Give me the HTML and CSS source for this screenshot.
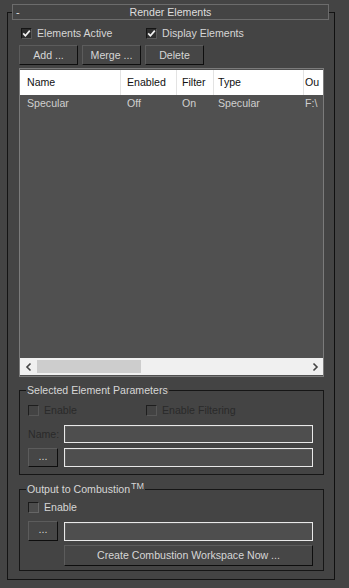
FILE: index.html
```html
<!DOCTYPE html>
<html>
<head>
<meta charset="utf-8">
<link rel="stylesheet" href="styles.css">
</head>
<body>
<div class="frame">
  <div class="rollout-head">
    <span class="minus">-</span>
    <span class="title">Render Elements</span>
    <span class="minus"></span>
  </div>
  <div class="content">
    <div class="check-row top-checks">
      <label class="check wide"><span class="box"><svg viewBox="0 0 11 11" width="11" height="11"><path d="M2.2 5.4 L4.4 7.8 L8.8 2.6" fill="none" stroke="#f2f2f2" stroke-width="1.7"/></svg></span>Elements Active</label>
      <label class="check"><span class="box"><svg viewBox="0 0 11 11" width="11" height="11"><path d="M2.2 5.4 L4.4 7.8 L8.8 2.6" fill="none" stroke="#f2f2f2" stroke-width="1.7"/></svg></span>Display Elements</label>
    </div>
    <div class="btn-row">
      <button class="btn btn-small">Add ...</button>
      <button class="btn btn-small">Merge ...</button>
      <button class="btn btn-small">Delete</button>
    </div>
    <div class="list">
      <div class="cols list-head">
        <div class="cell c-name">Name</div>
        <div class="cell c-enabled">Enabled</div>
        <div class="cell c-filter">Filter</div>
        <div class="cell c-type">Type</div>
        <div class="cell c-out">Ou</div>
      </div>
      <div class="list-body">
        <div class="cols list-row">
          <div class="cell c-name">Specular</div>
          <div class="cell c-enabled">Off</div>
          <div class="cell c-filter">On</div>
          <div class="cell c-type">Specular</div>
          <div class="cell c-out">F:\</div>
        </div>
      </div>
      <div class="hscroll">
        <span class="arrow"><svg viewBox="0 0 8 10" width="8" height="10"><path d="M5.5 1.5 L2 5 L5.5 8.5" fill="none" stroke="#444" stroke-width="1.6"/></svg></span>
        <div class="track"><div class="thumb"></div></div>
        <span class="arrow"><svg viewBox="0 0 8 10" width="8" height="10"><path d="M2.5 1.5 L6 5 L2.5 8.5" fill="none" stroke="#444" stroke-width="1.6"/></svg></span>
      </div>
    </div>

    <fieldset class="group group-params">
      <legend>Selected Element Parameters</legend>
      <div class="check-row params-checks">
        <label class="check disabled wide2"><span class="box off"></span>Enable</label>
        <label class="check disabled"><span class="box off"></span>Enable Filtering</label>
      </div>
      <div class="field-row name-row">
        <span class="field-label disabled">Name:</span>
        <span class="textbox"></span>
      </div>
      <div class="field-row path-row">
        <button class="btn btn-dots">...</button>
        <span class="textbox"></span>
      </div>
    </fieldset>

    <fieldset class="group group-comb">
      <legend>Output to Combustion<sup>TM</sup></legend>
      <div class="check-row comb-checks">
        <label class="check"><span class="box off"></span>Enable</label>
      </div>
      <div class="field-row path-row2">
        <button class="btn btn-dots">...</button>
        <span class="textbox"></span>
      </div>
      <div class="field-row create-row">
        <button class="btn btn-create">Create Combustion Workspace Now ...</button>
      </div>
    </fieldset>
  </div>
</div>
</body>
</html>
```

FILE: styles.css
```css
* { box-sizing: border-box; }

html, body {
  margin: 0;
  padding: 0;
}

body {
  width: 349px;
  height: 588px;
  overflow: hidden;
  background: #444444;
  color: #d6d6d6;
  font-family: "Liberation Sans", Arial, sans-serif;
  font-size: 10.6px;
  line-height: 13px;
}

.frame {
  margin: 12px 14px 0 7px;
  height: 568px;
  border: 1px solid #141414;
  border-right-color: #101010;
}

.rollout-head {
  margin: -9px 5px 0 4px;
  height: 16px;
  border: 1px solid #6c6c6c;
  background: #444444;
  display: flex;
  align-items: center;
  color: #dedede;
}

.minus {
  width: 14px;
  padding-left: 3px;
  font-size: 11px;
}

.title {
  flex: 1;
  text-align: center;
}

.content {
  padding: 0 10px 0 11px;
  display: flex;
  flex-direction: column;
}

.check-row {
  display: flex;
  align-items: center;
  height: 11px;
}

.top-checks {
  margin-top: 8px;
  padding-left: 2px;
}

.check {
  display: flex;
  align-items: center;
  gap: 5px;
  white-space: nowrap;
}

.check.wide { width: 125px; }
.check.wide2 { width: 118px; }

.box {
  width: 11px;
  height: 11px;
  flex: none;
  background: #2e2e2e;
  border: 1px solid #151515;
  border-right-color: #5a5a5a;
  border-bottom-color: #5a5a5a;
  display: flex;
  align-items: center;
  justify-content: center;
}

.box svg { display: block; margin: -1px; }

.box.off {
  background: #4c4c4c;
  border-color: #1a1a1a #666 #666 #1a1a1a;
}

.disabled { color: #2a2a2a; }
.check.disabled .box.off {
  background: #434343;
  border-color: #1e1e1e #575757 #575757 #1e1e1e;
}

.btn-row {
  display: flex;
  gap: 4px;
  margin-top: 6px;
}

.btn {
  font: inherit;
  color: #d6d6d6;
  background: #464646;
  border: 1px solid #0e0e0e;
  border-top-color: #5c5c5c;
  border-left-color: #5c5c5c;
  padding: 0;
  margin: 0;
  display: flex;
  align-items: center;
  justify-content: center;
}

.btn-small { width: 59px; height: 20px; }

.list {
  margin-top: 3px;
  height: 309px;
  border: 1px solid #7b7b7b;
  background: #505050;
  display: flex;
  flex-direction: column;
  overflow: hidden;
}

.cols {
  display: grid;
  grid-template-columns: 101px 56px 37px 90px 1fr;
}

.cell {
  padding-left: 6px;
  white-space: nowrap;
  overflow: hidden;
}

.list-head {
  height: 25px;
  margin-top: 1px;
  background: #ffffff;
  color: #111111;
  align-items: center;
}

.list-head .cell {
  border-right: 1px solid #e3e3e3;
  height: 100%;
  display: flex;
  align-items: center;
}

.list-head .c-name { padding-left: 7px; }
.list-head .c-type, .list-row .c-type { padding-left: 4px; }
.list-head .c-out, .list-row .c-out { padding-left: 1px; border-right: none; }
.list-head .c-filter, .list-row .c-filter { padding-left: 5px; }

.list-body {
  flex: 1;
  color: #cfcfcf;
}

.list-row {
  height: 17px;
  align-items: center;
}

.list-row .c-name { padding-left: 7px; }

.hscroll {
  height: 17px;
  background: #f0f0f0;
  display: flex;
  align-items: center;
  margin-bottom: 1px;
}

.arrow {
  width: 17px;
  height: 17px;
  display: flex;
  align-items: center;
  justify-content: center;
  flex: none;
}

.arrow svg { display: block; }

.track {
  flex: 1;
  height: 17px;
  padding: 2px 0;
  display: flex;
}

.thumb {
  width: 104px;
  height: 13px;
  background: #cdcdcd;
}

.group {
  margin: 0;
  border: 1px solid #161616;
  padding: 0 10px 0 8px;
  min-width: 0;
}

.group legend {
  padding: 0 1px;
  margin-left: -2px;
  color: #d6d6d6;
  line-height: 13px;
}

.group legend sup {
  font-size: 9px;
  vertical-align: 4px;
  line-height: 0;
  margin-left: 1px;
}

.group-params {
  margin-top: 7px;
  padding-bottom: 7px;
}

.group-comb {
  margin-top: 8px;
  padding-bottom: 4px;
}

.params-checks { margin-top: 8px; }
.comb-checks { margin-top: 6px; }

.field-row {
  display: flex;
  align-items: center;
}

.field-label { width: 36px; flex: none; }

.name-row { margin-top: 9px; height: 18px; }
.path-row { margin-top: 5px; height: 19px; }
.path-row2 { margin-top: 8px; height: 20px; }
.create-row { margin-top: 4px; height: 21px; padding-left: 36px; }

.btn-dots {
  width: 30px;
  height: 19px;
  margin-right: 6px;
  flex: none;
  padding-bottom: 3px;
}

.path-row2 .btn-dots { height: 20px; }

.textbox {
  flex: 1;
  height: 18px;
  background: #4e4e4e;
  border: 1px solid #e9e9e9;
  box-shadow: inset 1px 1px 0 #5a5a5a;
}

.path-row .textbox { height: 19px; }
.path-row2 .textbox { height: 19px; }

.btn-create {
  flex: 1;
  height: 21px;
}
```
